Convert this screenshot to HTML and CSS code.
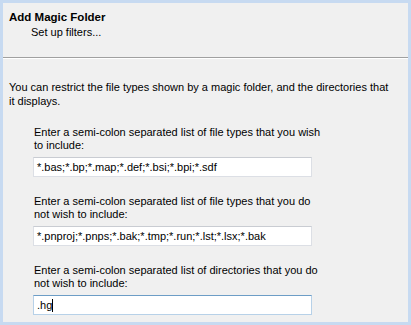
FILE: index.html
```html
<!DOCTYPE html>
<html>
<head>
<meta charset="utf-8">
<link rel="stylesheet" href="styles.css">
</head>
<body>
<div class="window">
  <div class="header">
    <div class="title">Add Magic Folder</div>
    <div class="subtitle">Set up filters...</div>
  </div>
  <div class="content">
    <p class="intro">You can restrict the file types shown by a magic folder, and the directories that it displays.</p>
    <div class="group">
      <div class="label">Enter a semi-colon separated list of file types that you wish to include:</div>
      <div class="box">*.bas;*.bp;*.map;*.def;*.bsi;*.bpi;*.sdf</div>
    </div>
    <div class="group">
      <div class="label">Enter a semi-colon separated list of file types that you do not wish to include:</div>
      <div class="box">*.pnproj;*.pnps;*.bak;*.tmp;*.run;*.lst;*.lsx;*.bak</div>
    </div>
    <div class="group">
      <div class="label">Enter a semi-colon separated list of directories that you do not wish to include:</div>
      <div class="box focus">.hg<span class="caret"></span></div>
    </div>
  </div>
</div>
</body>
</html>
```
FILE: styles.css
```css
html, body {
  margin: 0;
  padding: 0;
  background: #c7daf1;
  width: 411px;
  height: 325px;
  overflow: hidden;
}
body {
  font-family: "Liberation Sans", Arial, sans-serif;
  font-size: 11px;
  color: #000;
}
.window {
  margin: 3px;
  height: 319px;
  background: #f0f0f0;
  display: flex;
  flex-direction: column;
}
.header {
  height: 55px;
  border-bottom: 1px solid #a0a0a0;
  box-shadow: 0 1px 0 #ffffff;
  box-sizing: border-box;
  padding: 7px 0 0 6px;
  margin-bottom: 1px;
}
.title {
  font-weight: bold;
  font-size: 11.5px;
  line-height: 14px;
}
.subtitle {
  padding-left: 22px;
  margin-top: 2px;
  line-height: 13px;
}
.content {
  padding: 21px 0 0 6px;
}
.intro {
  margin: 0;
  line-height: 14px;
  width: 382px;
}
.group {
  margin: 18px 0 0 24px;
  width: 290px;
}
.label {
  line-height: 13px;
  width: 290px;
  padding-left: 1px;
}
.box {
  margin-top: 5px;
  height: 20px;
  box-sizing: border-box;
  width: 279px;
  background: #fff;
  border: 1px solid #dcdfe5;
  border-top-color: #c9ccd2;
  padding: 3px 0 0 3px;
  line-height: 13px;
  white-space: nowrap;
  overflow: hidden;
}
.box.focus {
  border-color: #b7d1e8;
  border-top-color: #6d9dc6;
}
.caret {
  display: inline-block;
  width: 1px;
  height: 13px;
  background: #000;
  vertical-align: top;
}
```
